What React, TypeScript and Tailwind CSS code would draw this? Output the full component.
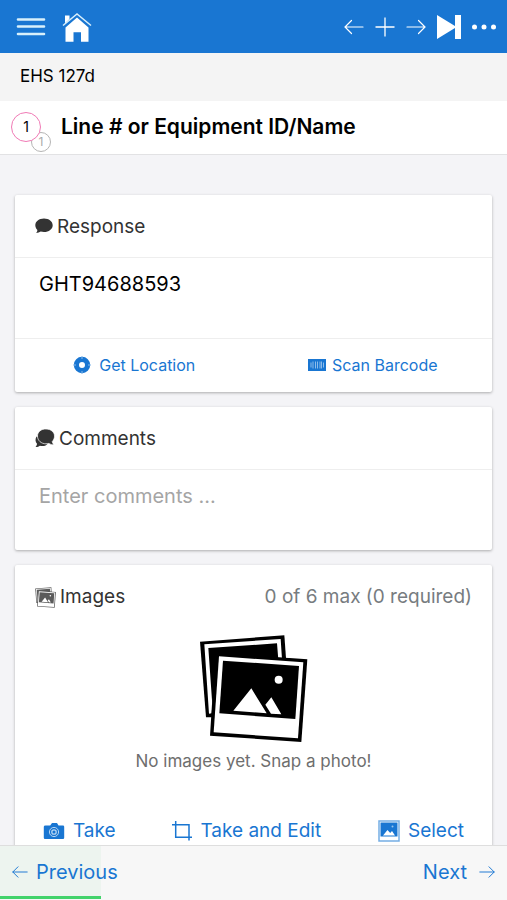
import { ReactNode, useState } from "react";

type IconProps = { className?: string };

const MenuIcon = () => (
  <svg className="h-8 w-8" viewBox="0 0 32 32" fill="none" stroke="#d8f0fb" strokeWidth="2.6" strokeLinecap="round">
    <path d="M3 8.500h26M3 15.500h26M3 23h26" />
  </svg>
);

const HomeIcon = () => (
  <svg className="h-8 w-8" viewBox="0 0 32 32">
    <path fill="#fff" d="M4 4.500h4.500V8L4 12.500zM16 6.500l11.500 10v14.300H20v-9.500h-7.500v9.500H4.500V16.500z" />
    <path fill="none" stroke="#d8effb" strokeWidth="1.500" d="M2 14.500 16 3l14 11.500" />
    <path fill="none" stroke="#1976d2" strokeWidth="0.800" d="M3 16 16 5.300 29 16" />
  </svg>
);

const ArrowIcon = ({ className = "" }: IconProps) => (
  <svg className={className} viewBox="0 0 20 20" fill="none" stroke="currentColor" strokeWidth="1.200" strokeLinecap="round">
    <path d="M19 10H1M7.500 3.500 1 10l6.500 6.500" />
  </svg>
);

const PlusIcon = () => (
  <svg className="h-5 w-5" viewBox="0 0 20 20" fill="none" stroke="currentColor" strokeWidth="1.300">
    <path d="M0.500 10h19M10 0.500v19" />
  </svg>
);

const SkipIcon = () => (
  <svg className="h-6 w-6" viewBox="0 0 24 24" fill="currentColor">
    <path d="M0 0l18 11V0h6v24h-6V13L0 24z" />
  </svg>
);

const DotsIcon = () => (
  <svg className="h-6 w-6" viewBox="0 0 24 24" fill="currentColor">
    <circle cx="2.500" cy="12" r="2.500" />
    <circle cx="12" cy="12" r="2.500" />
    <circle cx="21.500" cy="12" r="2.500" />
  </svg>
);

const ChatIcon = () => (
  <svg className="h-[18px] w-[18px]" viewBox="0 0 18 18" fill="currentColor">
    <path d="M9 .5c4.900 0 8.700 2.900 8.700 6.800s-3.800 6.800-8.700 6.800c-1.200 0-2.300-.2-3.300-.5-1.200.9-2.800 1.400-4.500 1.400.8-.9 1.200-2 1.200-3C1.100 10.800.3 9.200.3 7.300.3 3.400 4.100.5 9 .5z" />
  </svg>
);

const ChatsIcon = () => (
  <svg className="h-5 w-5" viewBox="0 0 20 20" fill="currentColor">
    <path d="M1.500 7.500C0 10 .3 13 2 14.700c0 1.100-.5 2-1.500 3.300 1.700.1 3.300-.4 4.400-1.300 2.600.8 5.600.3 7.500-1.500z" />
    <path
      stroke="#fff"
      strokeWidth="0.700"
      d="M11 0c4.800 0 8.500 3 8.500 7.100 0 2.100-.8 4-2.200 5.300 0 1.200.6 2.300 1.800 3.200-2 .3-3.800-.2-5.200-1.200-.9.300-1.900.4-2.900.4-4.800 0-8.500-3.300-8.500-7.700S6.200 0 11 0z"
    />
  </svg>
);

const PhotosIcon = ({ className = "" }: IconProps) => (
  <svg className={className} viewBox="12 12 327 327">
    <path fill="currentColor" d="M15 35 268 16l5 68v178L33 262z" />
    <path fill="#fff" d="M28 43 257 27l4 60-197 0-14 163-8 1z" />
    <path fill="currentColor" d="M40 54 246 40l4 50-186 0-12 135z" />
    <path fill="currentColor" d="M61 68l276 20-18 248-274-19z" />
    <path fill="#fff" d="M72 79l253 18-16 228-253-18z" />
    <path fill="currentColor" d="M84 92l228 16-11 159-228-17z" />
    <circle cx="251" cy="149" r="12" fill="#fff" />
    <path fill="#fff" d="M169 175l46 75-100-8zM229 202l30 51-31-2-17-27z" />
    <path fill="#fff" d="M273 16h10v67l-10-1z" />
  </svg>
);

const LocationIcon = () => (
  <svg className="h-[18px] w-[18px]" viewBox="0 0 18 18">
    <circle cx="9" cy="9" r="5.600" fill="none" stroke="currentColor" strokeWidth="5.200" />
    <path stroke="#8dbdeb" strokeWidth="1" d="M9 0v3M9 15v3M0 9h3M15 9h3" />
  </svg>
);

const BarcodeIcon = () => (
  <svg className="h-3 w-[18px]" viewBox="0 0 18 12">
    <path fill="currentColor" d="M0 0h18v12H0z" />
    <path stroke="#9bc4ec" strokeWidth="0.900" d="M3 3.500v5M5 2.500v7M7.500 2.500v7M9.500 2.500v7M12 2.500v7M13.500 2.500v7M15.500 3.500v5" />
  </svg>
);

const CameraIcon = () => (
  <svg className="h-5 w-[22px]" viewBox="0 0 22 20">
    <path fill="currentColor" d="M2.500 4.500h4.700L9 2h5l1.500 2.500H20q1.200 0 1.200 1.200v11q0 1.300-1.200 1.300H2Q.8 18 .8 16.700v-11q0-1.200 1.700-1.200z" />
    <circle cx="11" cy="11" r="4.600" fill="none" stroke="#b5d5f2" />
    <circle cx="11" cy="11" r="2.200" fill="none" stroke="#b5d5f2" strokeWidth="1.300" />
  </svg>
);

const CropIcon = () => (
  <svg className="h-5 w-5" viewBox="0 0 20 20" fill="none" stroke="currentColor" strokeWidth="1.500">
    <path d="M0 3.700h17v15.800M3.700 0v16.300H20" />
  </svg>
);

const PictureIcon = () => (
  <svg className="h-[22px] w-[22px]" viewBox="0 0 22 22">
    <path fill="#fff" stroke="#75aee5" strokeWidth="1.500" d="M1 1h20v20H1z" />
    <path fill="currentColor" d="M2.500 2.500h17v14h-17z" />
    <circle cx="14.500" cy="6.500" r="1" fill="#9bc4ec" />
    <path fill="#fff" d="M5 15.500 9.500 10l2.700 3 1.800-2 3 4.500z" />
  </svg>
);

const CardTitle = ({ children }: { children: ReactNode }) => (
  <h2 className="flex items-center gap-1 text-[19px] leading-6 text-[#333]">{children}</h2>
);

const card = "bg-white rounded-xs shadow-[0_1px_3px_rgba(0,0,0,0.3)]";
const textBox = "block w-full resize-none bg-transparent px-6 pt-3 text-xl leading-7 outline-none";

const App = () => {
  const [response, setResponse] = useState("GHT94688593");
  const [comments, setComments] = useState("");

  return (
    <div className="flex h-screen flex-col bg-[#f4f4f7] font-['Inter','Liberation_Sans',sans-serif] text-black">
      <header className="flex h-[53px] shrink-0 items-center justify-between bg-[#1976d2] pr-[11px] pl-[15px] text-white">
        <div className="flex items-center gap-[14px]">
          <button aria-label="Menu"><MenuIcon /></button>
          <button aria-label="Home"><HomeIcon /></button>
        </div>
        <div className="flex items-center gap-[11px]">
          <button aria-label="Previous item"><ArrowIcon className="h-5 w-5" /></button>
          <button aria-label="Add"><PlusIcon /></button>
          <button aria-label="Next item"><ArrowIcon className="h-5 w-5 rotate-180" /></button>
          <button aria-label="Skip to end"><SkipIcon /></button>
          <button aria-label="More"><DotsIcon /></button>
        </div>
      </header>
      <div className="flex h-12 shrink-0 items-center bg-[#f4f4f4] px-5 text-[17px]">EHS 127d</div>
      <div className="flex h-[54px] shrink-0 items-center gap-5 border-b border-[#e2e2e4] bg-white px-[11px] pb-[2px]">
        <div className="relative h-[30px] w-[30px] text-center">
          <span className="absolute top-5 left-5 h-5 w-5 rounded-full border border-[#b5b5b5] text-xs leading-[18px] text-[#aaa]">1</span>
          <span className="relative block h-[30px] w-[30px] rounded-full border border-[#f07ab5] bg-white text-sm leading-7">1</span>
        </div>
        <h1 className="text-[21px] leading-7 font-semibold">Line # or Equipment ID/Name</h1>
      </div>

      <main className="flex min-h-0 flex-1 flex-col gap-[15px] overflow-y-auto px-[15px] pt-10 [scrollbar-width:none]">
        <section className={card}>
          <div className="border-b border-[#eee] px-5 pt-5 pb-[18px]">
            <CardTitle><ChatIcon /><label htmlFor="response">Response</label></CardTitle>
          </div>
          <textarea id="response" className={`${textBox} h-20`} value={response} onChange={(e) => setResponse(e.target.value)} />
          <div className="grid h-[54px] grid-cols-2 border-t border-[#eee] pb-[2px] text-base text-[#1976d2]">
            <button className="flex items-center justify-center gap-2"><LocationIcon />Get Location</button>
            <button className="flex items-center justify-center gap-[6px]"><BarcodeIcon />Scan Barcode</button>
          </div>
        </section>

        <section className={card}>
          <div className="border-b border-[#eee] px-5 pt-5 pb-[18px]">
            <CardTitle><ChatsIcon /><label htmlFor="comments">Comments</label></CardTitle>
          </div>
          <textarea
            id="comments"
            className={`${textBox} h-20 placeholder:text-[#a5a5a5]`}
            placeholder="Enter comments ..."
            value={comments}
            onChange={(e) => setComments(e.target.value)}
          />
        </section>

        <section className={card}>
          <div className="flex items-center justify-between px-5 pt-5">
            <CardTitle><PhotosIcon className="h-[21px] w-[21px] opacity-80" />Images</CardTitle>
            <span className="text-[19px] leading-6 text-[#777c80]">0 of 6 max (0 required)</span>
          </div>
          <div className="flex flex-col items-center pt-[25px]">
            <PhotosIcon className="h-[109px] w-[109px]" />
            <p className="pt-[6px] text-[17px] leading-6 text-[#6e6e6e]">No images yet. Snap a photo!</p>
          </div>
          <div className="flex justify-between px-7 pt-[46px] pb-5 text-[19px] leading-6 text-[#1976d2]">
            <button className="flex items-center gap-2"><CameraIcon />Take</button>
            <button className="flex items-center gap-2"><CropIcon />Take and Edit</button>
            <button className="flex items-center gap-2"><PictureIcon />Select</button>
          </div>
        </section>
      </main>

      <footer className="relative flex h-[55px] shrink-0 items-center justify-between border-t border-[#dedede] bg-[#f7f7f7] px-3 pb-[2px] text-xl text-[#1976d2]">
        <div className="absolute top-0 bottom-px left-0 w-1/5 border-b-3 border-[#42d36b] bg-[#edf4ef]" />
        <button className="relative flex items-center gap-2"><ArrowIcon className="h-4 w-4" />Previous</button>
        <button className="relative flex items-center gap-3">Next<ArrowIcon className="h-4 w-4 rotate-180" /></button>
      </footer>
    </div>
  );
};

export default App;
